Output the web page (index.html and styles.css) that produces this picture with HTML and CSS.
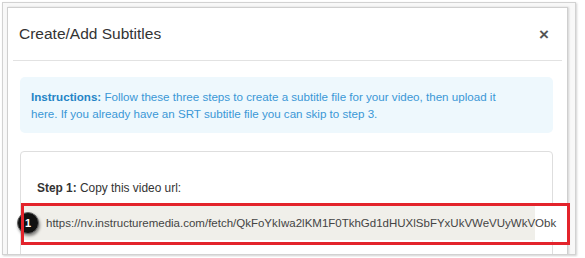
FILE: index.html
```html
<!DOCTYPE html>
<html lang="en">
<head>
    <meta charset="UTF-8">
    <meta name="viewport" content="width=device-width, initial-scale=1.0">
    <title>Create/Add Subtitles</title>
    <link rel="stylesheet" href="styles.css">
</head>
<body>
    <div class="frame">
        <div class="dialog">
            <header class="dialogHeader">
                <p class="dialogTitle">Create/Add Subtitles</p>
                <button class="closeBtn">&times;</button>
            </header>
            <section class="dialogBody">
                <div class="instructions">
                    <b>Instructions:</b> Follow these three steps to create a subtitle file for your video, then upload it<br>
                    here. If you already have an SRT subtitle file you can skip to step 3.
                </div>
                <div class="stepBox">
                    <p class="stepLabel"><b>Step 1:</b> Copy this video url:</p>
                    <div class="urlRow">
                        <span class="urlText">https://nv.instructuremedia.com/fetch/QkFoYkIwa2lKM1F0TkhGd1dHUXlSbFYxUkVWeVUyWkVObk</span>
                        <span class="badge">1</span>
                        <span class="highlight"></span>
                    </div>
                </div>
            </section>
        </div>
    </div>
</body>
</html>
```

FILE: styles.css
```css
*{
    margin: 0; padding: 0;
    box-sizing: border-box;
}
body{
    background-color: #fff;
    font-family: "Liberation Sans", Arial, sans-serif;
    color: #333;
}
.frame{
    width: 574px;
    height: 253px;
    margin: 2px;
    border: 1px solid #d2d2d2;
    box-shadow: 1px 1px 2px rgba(0,0,0,0.18);
    background-color: #f8f8f8;
    overflow: hidden;
}
.dialog{
    width: 561px;
    height: 300px;
    margin: 4px 0 0 4px;
    background-color: #fff;
    border: 1px solid #cfcfcf;
    box-shadow: 1px 0 2px rgba(0,0,0,0.15);
}
.dialogHeader{
    height: 53px;
    margin: 0 5px;
    padding: 0 13px 0 6px;
    border-bottom: 1px solid #e2e2e2;
    display: flex;
    align-items: center;
    justify-content: space-between;
}
.dialogTitle{
    font-size: 15.5px;
    color: #333;
}
.closeBtn{
    border: 0;
    background-color: transparent;
    font-family: "Liberation Sans", Arial, sans-serif;
    font-size: 17px;
    font-weight: 700;
    color: #555;
    line-height: 1;
}
.dialogBody{
    padding: 16px 14px 0 12px;
}
.instructions{
    background-color: #eef8fd;
    border-radius: 5px;
    padding: 11px 11px;
    font-size: 11.6px;
    line-height: 17px;
    color: #3a97d6;
    white-space: nowrap;
}
.instructions b{
    color: #2484c6;
}
.stepBox{
    margin-top: 18px;
    border: 1px solid #dedede;
    border-radius: 4px;
    padding: 28px 0 20px 0;
}
.stepLabel{
    padding-left: 16px;
    font-size: 11.9px;
    line-height: 17px;
    color: #333;
}
.urlRow{
    position: relative;
    width: 540px;
    height: 34px;
    margin: 9px 0 0 1px;
    background: linear-gradient(to right, #f0efea 513px, #fff 513px);
}
.urlText{
    display: block;
    width: 545px;
    height: 34px;
    padding-left: 24px;
    overflow: hidden;
    font-size: 11.5px;
    line-height: 34px;
    color: #444;
    white-space: nowrap;
}
.badge{
    position: absolute;
    left: -5px;
    top: 6px;
    width: 22px;
    height: 22px;
    border-radius: 50%;
    background-color: #111;
    border: 1px solid #666;
    box-shadow: 1px 2px 3px rgba(0,0,0,0.45);
    color: #fff;
    font-size: 11px;
    font-weight: 700;
    line-height: 20px;
    text-align: center;
}
.highlight{
    position: absolute;
    left: -1px;
    top: -3px;
    width: 549px;
    height: 42px;
    border: 3px solid #e3232b;
}
```
